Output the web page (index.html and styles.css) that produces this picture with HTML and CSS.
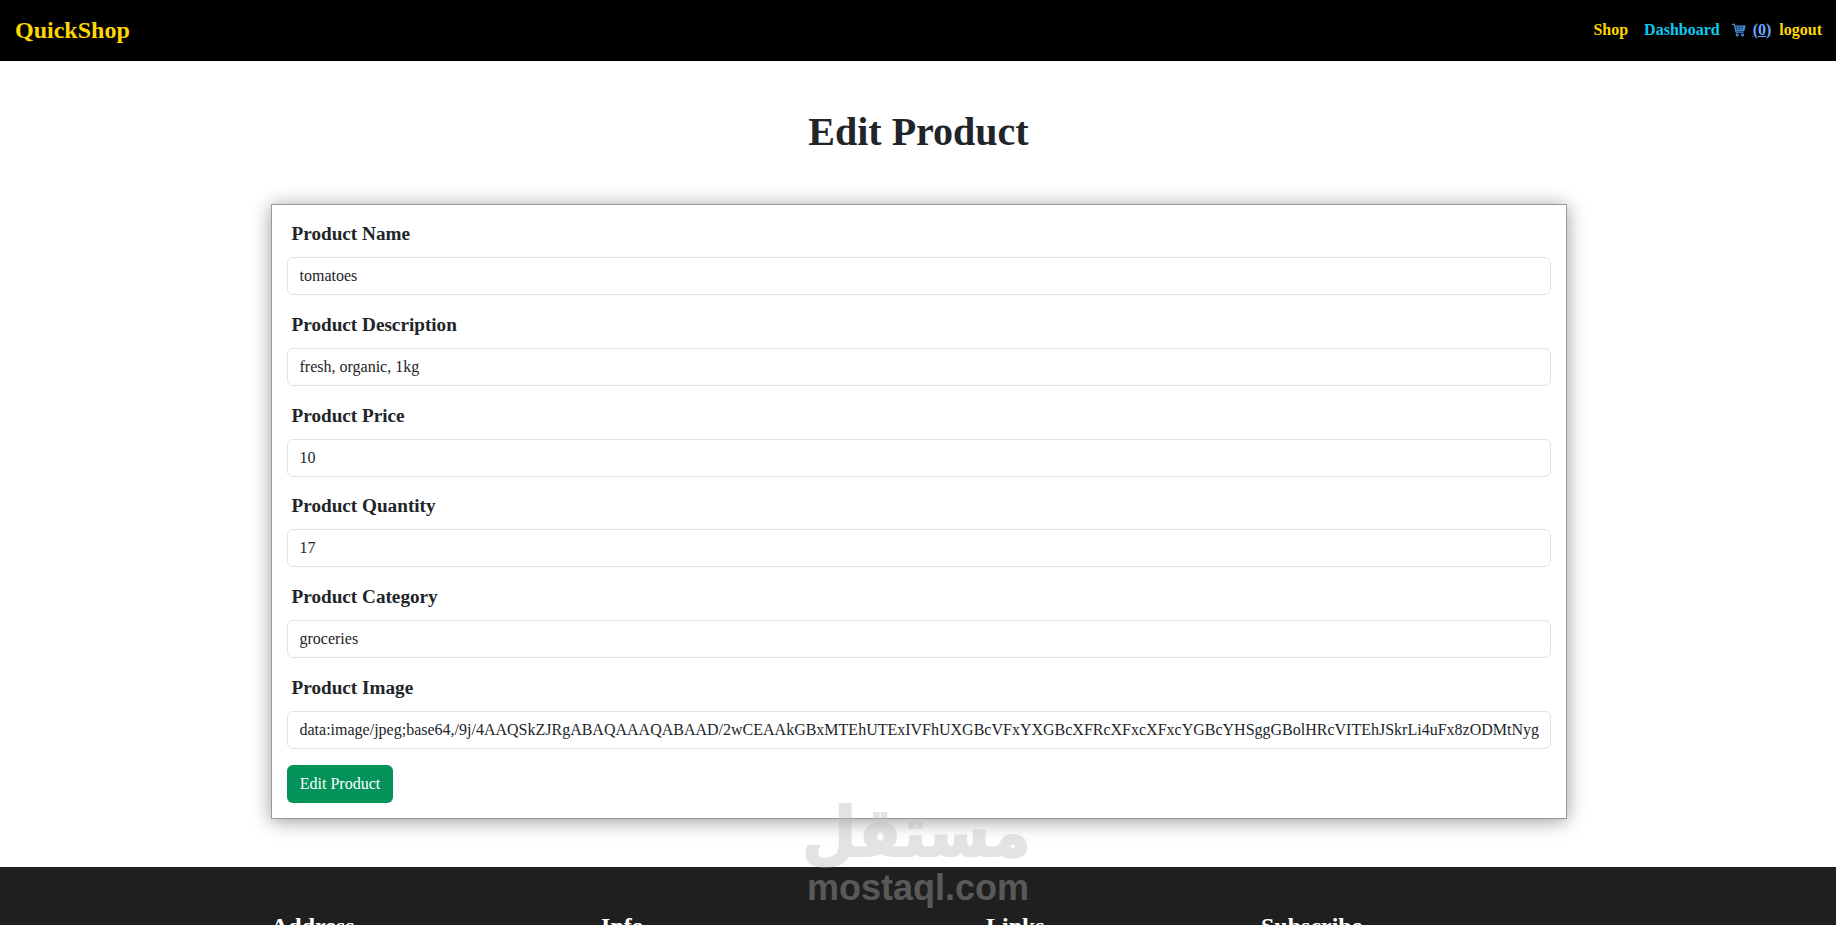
FILE: index.html
```html
<!DOCTYPE html>
<html lang="en">
<head>
    <meta charset="UTF-8">
    <meta name="viewport" content="width=device-width, initial-scale=1.0">
    <title>Edit Product</title>
    <link rel="stylesheet" href="styles.css">
</head>
<body>
    <nav class="navbar">
        <a class="brand" href="#">QuickShop</a>
        <div class="nav-links">
            <a class="nav-link yellow" href="#">Shop</a>
            <a class="nav-link cyan" href="#">Dashboard</a>
            <a class="nav-link cart" href="#">
                <svg class="cart-icon" viewBox="0 0 16 16" fill="none" stroke="currentColor" stroke-width="1.3"><path d="M0 1.5h2.6l2 9h8.6M3 3.5h12l-1.4 5H4.2M6.5 3.5l.5 5M10 3.5v5M13 3.5l-.7 5M3.6 6h11"/><circle cx="6" cy="13.5" r="1.2"/><circle cx="12" cy="13.5" r="1.2"/></svg>
                <span class="cart-count">(0)</span>
            </a>
            <a class="nav-link yellow logout" href="#">logout</a>
        </div>
    </nav>

    <main class="container">
        <h1 class="page-title">Edit Product</h1>
        <form class="product-form">
            <div class="field">
                <label for="name">Product Name</label>
                <input id="name" type="text" value="tomatoes">
            </div>
            <div class="field">
                <label for="description">Product Description</label>
                <input id="description" type="text" value="fresh, organic, 1kg">
            </div>
            <div class="field">
                <label for="price">Product Price</label>
                <input id="price" type="text" value="10">
            </div>
            <div class="field">
                <label for="quantity">Product Quantity</label>
                <input id="quantity" type="text" value="17">
            </div>
            <div class="field">
                <label for="category">Product Category</label>
                <input id="category" type="text" value="groceries">
            </div>
            <div class="field">
                <label for="image">Product Image</label>
                <input id="image" type="text" value="data:image/jpeg;base64,/9j/4AAQSkZJRgABAQAAAQABAAD/2wCEAAkGBxMTEhUTExIVFhUXGBcVFxYXGBcXFRcXFxcXFxcYGBcYHSggGBolHRcVITEhJSkrLi4uFx8zODMtNyg">
            </div>
            <button class="submit-btn" type="button">Edit Product</button>
        </form>
    </main>

    <footer class="footer">
        <div class="footer-inner">
            <h4 class="col-address">Address</h4>
            <h4 class="col-info">Info</h4>
            <h4 class="col-links">Links</h4>
            <h4 class="col-subscribe">Subscribe</h4>
        </div>
    </footer>

    <div class="watermark">
        <div class="watermark-ar" lang="ar" dir="rtl">مستقل</div>
        <div class="watermark-en">mostaql.com</div>
    </div>
</body>
</html>
```

FILE: styles.css
```css
* {
    box-sizing: border-box;
}

html, body {
    height: 925px;
    overflow: hidden;
}

body {
    margin: 0;
    background: #fff;
    color: #212529;
    font-family: 'Liberation Serif', 'Times New Roman', serif;
    font-size: 16px;
    line-height: 1.5;
    position: relative;
}

.navbar {
    height: 61px;
    background: #000;
    display: flex;
    align-items: center;
    justify-content: space-between;
    padding: 0 14px 2px 15px;
}

.brand {
    color: #ffd700;
    font-size: 24px;
    font-weight: bold;
    text-decoration: none;
}

.nav-links {
    display: flex;
    align-items: center;
}

.nav-link {
    font-weight: bold;
    text-decoration: none;
    margin-left: 9px;
}

.logout {
    margin-left: 8px;
}

.yellow {
    color: #ffd700;
}

.cyan {
    color: #0dcaf0;
    margin-left: 16px;
    margin-right: 3px;
}

.cart {
    color: #6ea8fe;
}

.cart-icon {
    width: 14px;
    height: 14px;
    margin-right: 3px;
    vertical-align: -2px;
    color: #4a90e2;
}

.cart-count {
    text-decoration: underline;
}

.container {
    width: 1296px;
    margin: 0 269px 0 271px;
}

.page-title {
    margin: 0 1px 0 0;
    padding-top: 47px;
    text-align: center;
    font-size: 40px;
    line-height: 48px;
    font-weight: bold;
}

.product-form {
    margin-top: 48px;
    padding: 15px;
    height: 615px;
    border: 1px solid #999;
    box-shadow: 0 2px 18px rgba(0, 0, 0, 0.4);
}

.field {
    margin-bottom: 15.75px;
}

.field label {
    display: block;
    font-size: 19.2px;
    font-weight: bold;
    line-height: 23px;
    padding: 2px 0 0 4.5px;
    margin-bottom: 12px;
}

.field input {
    display: block;
    width: 100%;
    height: 38px;
    padding: 6px 11.5px;
    border: 1px solid #dee2e6;
    border-radius: 6px;
    color: #212529;
    background: #fff;
    font-family: inherit;
    font-size: 16px;
}

.submit-btn {
    display: block;
    width: 106px;
    height: 38px;
    padding: 0;
    border: 0;
    border-radius: 6px;
    background: #03925a;
    color: #fff;
    font-family: inherit;
    font-size: 16px;
}

.footer {
    margin-top: 48px;
    height: 58px;
    background: #1f1f1f;
    color: #fff;
}

.footer-inner {
    width: 1296px;
    margin: 0 269px 0 271px;
    padding-top: 45px;
    display: flex;
}

.footer-inner h4 {
    margin: 0;
    font-size: 24px;
    line-height: 29px;
    font-weight: bold;
}

.col-address {
    width: 330px;
}

.col-info {
    width: 385px;
}

.col-links {
    width: 275px;
}

/* site watermark sits over the page */
.watermark {
    position: absolute;
    left: 808px;
    top: 796px;
    width: 220px;
    display: flex;
    flex-direction: column;
    align-items: center;
    pointer-events: none;
    color: #b8b8b8;
    opacity: 0.38;
}

.watermark-ar {
    font-family: 'DejaVu Sans', sans-serif;
    font-size: 68px;
    font-weight: bold;
    line-height: 74px;
    white-space: nowrap;
    -webkit-text-stroke: 2px #b8b8b8;
    transform: translateX(-2px) scaleX(0.92);
}

.watermark-en {
    font-family: 'Liberation Sans', Arial, sans-serif;
    font-size: 36px;
    font-weight: bold;
    line-height: 36px;
    white-space: nowrap;
}
```
